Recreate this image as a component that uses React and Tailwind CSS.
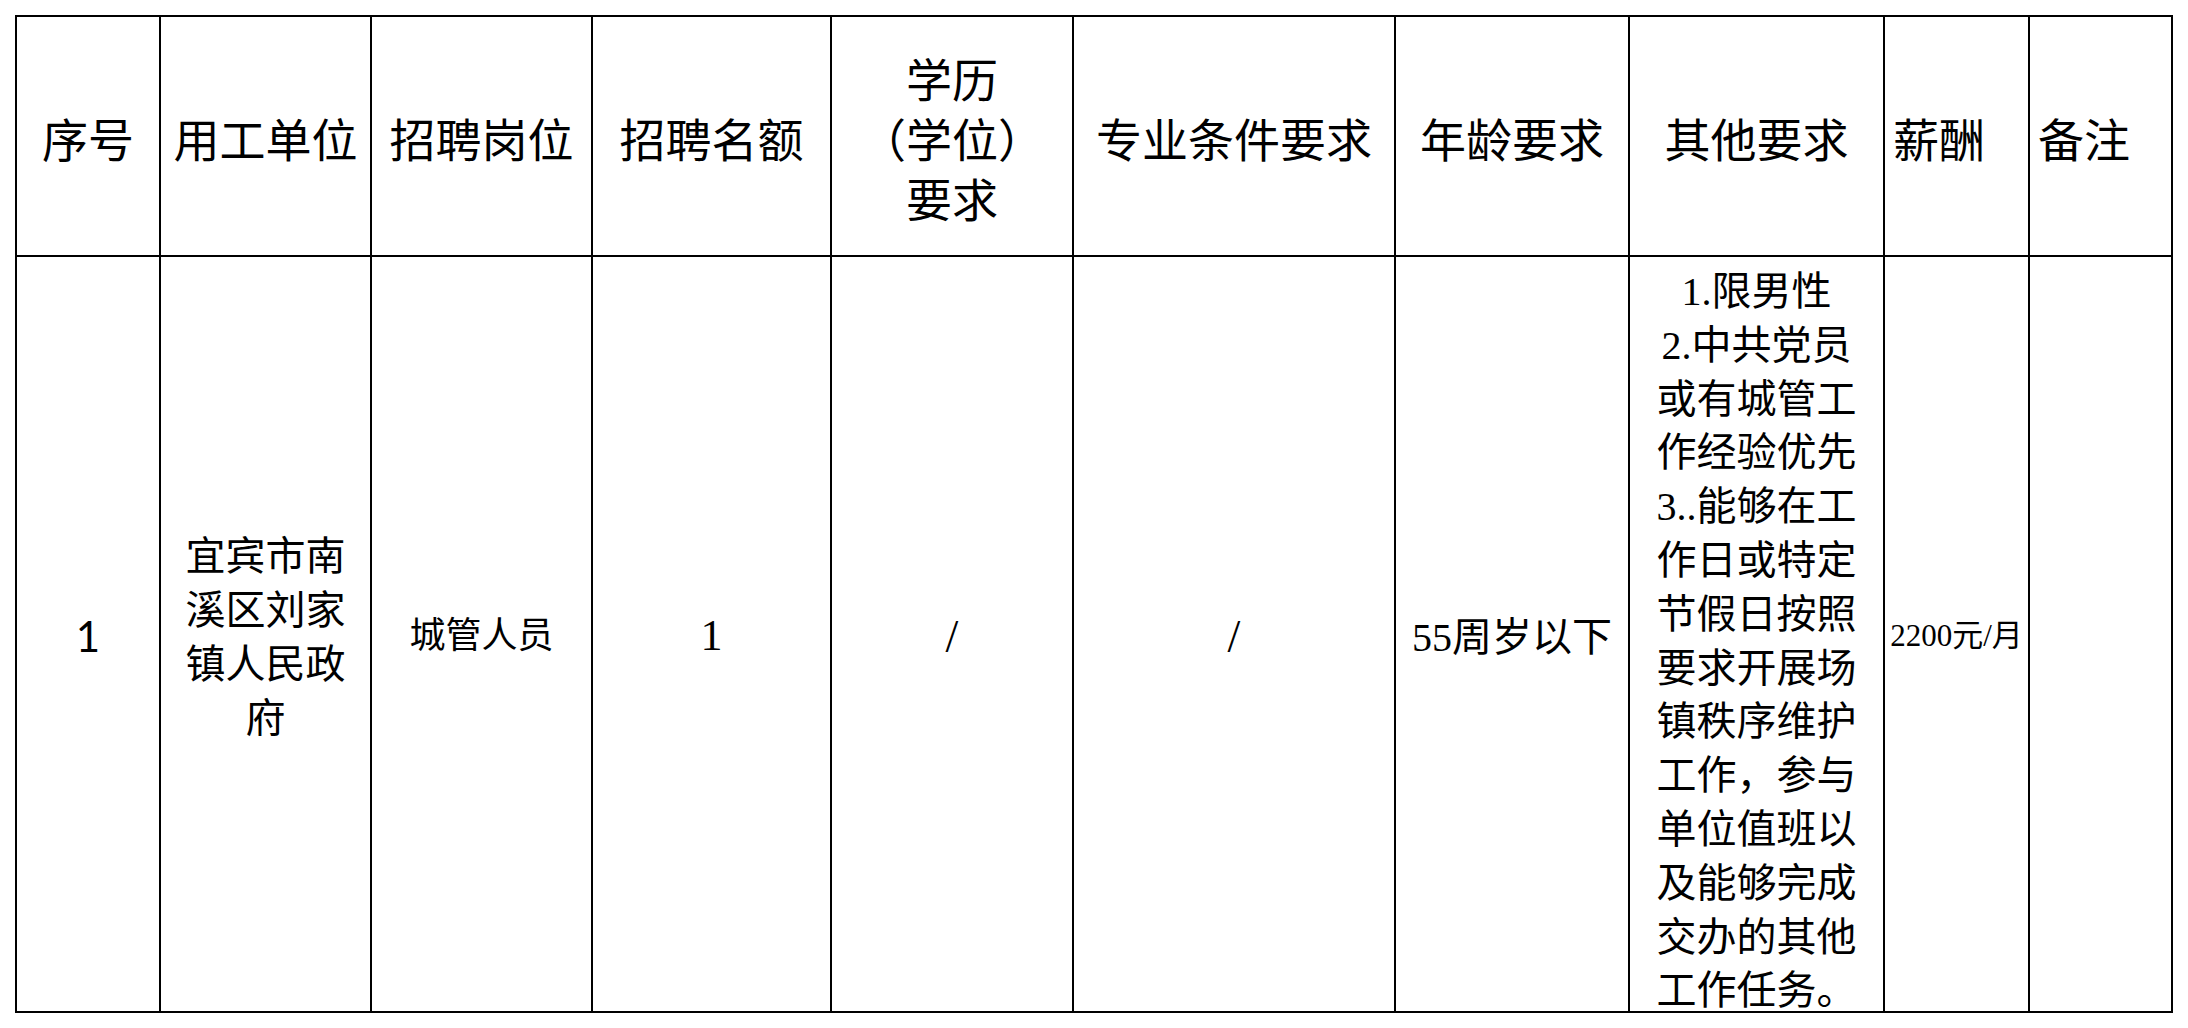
const HEADERS = [
  { key: "no", label: ["序号"] },
  { key: "unit", label: ["用工单位"] },
  { key: "post", label: ["招聘岗位"] },
  { key: "count", label: ["招聘名额"] },
  { key: "edu", label: ["学历", "（学位）", "要求"] },
  { key: "major", label: ["专业条件要求"] },
  { key: "age", label: ["年龄要求"] },
  { key: "other", label: ["其他要求"] },
  { key: "pay", label: ["薪酬"], left: true },
  { key: "note", label: ["备注"], left: true },
];

const OTHER_LINES = [
  "1.限男性",
  "2.中共党员",
  "或有城管工",
  "作经验优先",
  "3..能够在工",
  "作日或特定",
  "节假日按照",
  "要求开展场",
  "镇秩序维护",
  "工作，参与",
  "单位值班以",
  "及能够完成",
  "交办的其他",
  "工作任务。",
];

const song = "font-['Liberation_Serif','Noto_Sans_CJK_SC',serif]";

function Cell({ children, className = "" }) {
  return (
    <div className={`flex items-center justify-center bg-white text-center text-black ${className}`}>
      {children}
    </div>
  );
}

export default function App() {
  return (
    <div className="min-h-screen bg-white pl-[15px] pt-[15px]">
      <div className="grid w-[2158px] grid-cols-[142px_209px_219px_237px_240px_320px_232px_253px_143px_141px] grid-rows-[238px_754px] gap-[2px] bg-black p-[2px]">
        {HEADERS.map((h) => (
          <Cell
            key={h.key}
            className={`${song} pt-[12px] text-[46px] leading-[60px] ${h.left ? "!justify-start pl-[8px]" : ""}`}
          >
            <div className="whitespace-nowrap">
              {h.label.map((line) => (
                <div key={line}>{line}</div>
              ))}
            </div>
          </Cell>
        ))}

        {/* 第一行数据 */}
        <Cell className="pt-[4px] font-['Lato','Open_Sans',sans-serif] text-[42px]">1</Cell>
        <Cell className={`${song} pt-[8px] text-[40px] leading-[54px]`}>
          <div>
            <div>宜宾市南</div>
            <div>溪区刘家</div>
            <div>镇人民政</div>
            <div>府</div>
          </div>
        </Cell>
        <Cell className={`${song} pt-[4px] text-[36px]`}>城管人员</Cell>
        <Cell className={`${song} pt-[4px] text-[44px]`}>1</Cell>
        <Cell className={`${song} pt-[4px] text-[46px]`}>/</Cell>
        <Cell className={`${song} pt-[4px] text-[46px]`}>/</Cell>
        <Cell className={`${song} pt-[8px] text-[40px]`}>55周岁以下</Cell>
        <Cell className={`${song} !items-start pt-[8px] text-[40px] leading-[53.8px]`}>
          <div className="whitespace-nowrap">
            {OTHER_LINES.map((line) => (
              <div key={line}>{line}</div>
            ))}
          </div>
        </Cell>
        <Cell className={`${song} pt-[4px] whitespace-nowrap text-[31px]`}>2200元/月</Cell>
        <Cell />
      </div>
    </div>
  );
}
